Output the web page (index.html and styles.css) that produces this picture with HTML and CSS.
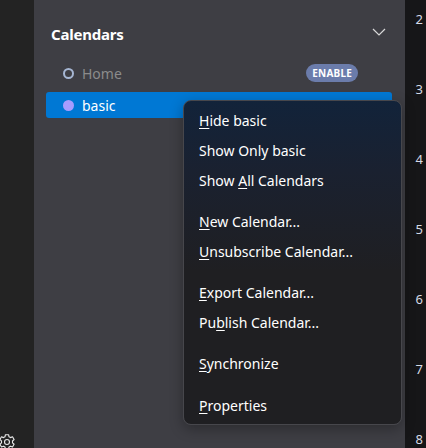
FILE: index.html
```html
<!DOCTYPE html>
<html>
<head>
<meta charset="utf-8">
<link rel="stylesheet" href="styles.css">
</head>
<body>
<div class="app">
  <div class="rail">
    <svg class="gear" width="18" height="18" viewBox="0 0 16 16"><path d="M6.6 1.5h2.8l.4 1.9 1.3.7 1.8-.7 1.4 2.4-1.4 1.3v1.6l1.4 1.3-1.4 2.4-1.8-.7-1.3.7-.4 1.9H6.6l-.4-1.9-1.3-.7-1.8.7-1.4-2.4 1.4-1.3V7.1L1.7 5.8l1.4-2.4 1.8.7 1.3-.7z" fill="none" stroke="#e8e8e8" stroke-width="1" stroke-linejoin="round"/><circle cx="8" cy="8" r="2.2" fill="none" stroke="#e8e8e8" stroke-width="1"/></svg>
  </div>
  <div class="sidebar">
    <div class="header">
      <span class="title">Calendars</span>
      <svg class="chev" width="14" height="8" viewBox="0 0 14 8"><path d="M1 1l6 6 6-6" fill="none" stroke="#d8d8d8" stroke-width="1.2"/></svg>
    </div>
    <div class="row">
      <span class="ring"></span>
      <span class="name muted">Home</span>
      <span class="pill">ENABLE</span>
    </div>
    <div class="row selected">
      <span class="dot"></span>
      <span class="name">basic</span>
    </div>
  </div>
  <div class="days">
    <span>2</span><span>3</span><span>4</span><span>5</span><span>6</span><span>7</span><span>8</span>
  </div>
  <div class="menu">
    <div class="item"><u>H</u>ide basic</div>
    <div class="item">Show Only basic</div>
    <div class="item">Show <u>A</u>ll Calendars</div>
    <div class="sep"></div>
    <div class="item"><u>N</u>ew Calendar...</div>
    <div class="item"><u>U</u>nsubscribe Calendar...</div>
    <div class="sep"></div>
    <div class="item"><u>E</u>xport Calendar...</div>
    <div class="item">Pu<u>b</u>lish Calendar...</div>
    <div class="sep"></div>
    <div class="item"><u>S</u>ynchronize</div>
    <div class="sep sep2"></div>
    <div class="item"><u>P</u>roperties</div>
  </div>
</div>
</body>
</html>
```
FILE: styles.css
```css
* { box-sizing: border-box; }
html, body { margin: 0; padding: 0; }
body {
  width: 426px;
  height: 448px;
  overflow: hidden;
  background: #161618;
  font-family: "Noto Sans", "Open Sans", sans-serif;
}
.app {
  position: relative;
  display: flex;
  width: 426px;
  height: 448px;
  overflow: hidden;
}
.rail {
  width: 34px;
  flex: none;
  background: #232323;
  position: relative;
}
.gear {
  position: absolute;
  left: -2px;
  top: 433px;
}
.sidebar {
  width: 371px;
  flex: none;
  background: #3e3e44;
  padding: 0 13px 0 12px;
}
.header {
  display: flex;
  align-items: center;
  justify-content: space-between;
  height: 34px;
  margin-top: 17px;
  padding: 0 6px 0 5px;
}
.title {
  color: #ffffff;
  font-weight: 700;
  font-size: 15px;
  letter-spacing: -0.2px;
}
.chev { margin-top: -4px; }
.row {
  display: flex;
  align-items: center;
  height: 26px;
  padding-left: 17px;
  border-radius: 3px;
}
.header + .row { margin-top: 9px; }
.row + .row { margin-top: 6px; }
.ring {
  width: 11px;
  height: 11px;
  border: 2px solid #a6b6d3;
  border-radius: 50%;
}
.dot {
  width: 11px;
  height: 11px;
  border-radius: 50%;
  background: #a79cff;
}
.name {
  margin-left: 8px;
  font-size: 14px;
  color: #ffffff;
}
.name.muted { color: #8b8b8b; }
.pill {
  margin-left: auto;
  margin-right: 34px;
  background: #6b7cab;
  color: #ffffff;
  font-weight: 700;
  font-size: 10px;
  letter-spacing: 0.2px;
  height: 18px;
  line-height: 18px;
  padding: 0 6px;
  border-radius: 9px;
}
.selected { background: #0078d4; }
.days {
  flex: 1;
  display: flex;
  flex-direction: column;
  align-items: flex-end;
  padding: 10px 3px 0 0;
  color: #d6dbe6;
  font-size: 13px;
}
.days span { flex: none; height: 70px; line-height: 18px; }
.menu {
  position: absolute;
  left: 183px;
  top: 100px;
  width: 219px;
  height: 325px;
  border: 1px solid #47474c;
  border-radius: 8px;
  background: linear-gradient(to bottom, #12233a 0px, #1a2130 70px, #1f1f22 170px, #1f1f22 100%);
  padding: 5px 0 4px 0;
  box-shadow: 0 4px 14px rgba(0,0,0,0.3);
}
.item {
  height: 30px;
  line-height: 30px;
  padding-left: 15px;
  color: #ffffff;
  font-size: 14px;
}
.item u { text-underline-offset: 2px; text-decoration-thickness: 1px; }
.sep { height: 11px; }
.sep2 { height: 12px; }
```
